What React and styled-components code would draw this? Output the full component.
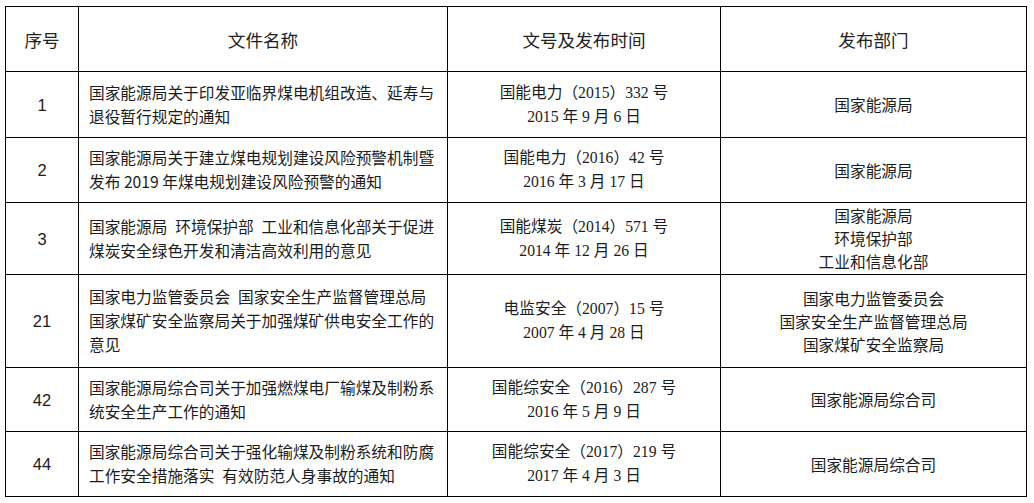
import React from "react";
import styled, { createGlobalStyle } from "styled-components";

const Global = createGlobalStyle`
  html, body { margin: 0; padding: 0; background: #fff; }
  body { font-family: "Noto Sans CJK SC", sans-serif; color: #1c1c1c; }
`;

const Page = styled.div`
  padding: 6px 0 0 5px;
`;

const Table = styled.table`
  border-collapse: collapse;
  table-layout: fixed;
  width: 1021px;
`;

const Row = styled.tr`
  height: ${(p) => p.$h}px;
`;

const HeadCell = styled.th`
  border: 1px solid #000;
  padding: 0;
  font-weight: 400;
  font-size: 17.6px;
  font-family: "Noto Sans CJK SC", sans-serif;
  text-align: center;
  vertical-align: middle;
  color: #222;
`;

const Cell = styled.td`
  border: 1px solid #000;
  padding: ${(p) => (p.$align === "left" ? "0 0 0 10px" : "0")};
  text-align: ${(p) => p.$align || "center"};
  vertical-align: middle;
  font-size: ${(p) => (p.$num ? "16.5px" : "15.7px")};
  line-height: ${(p) => p.$lh || 24}px;
  white-space: nowrap;
  font-family: ${(p) =>
    p.$serif
      ? `"Liberation Serif", "Noto Sans CJK SC", serif`
      : p.$num
      ? `"Liberation Sans", sans-serif`
      : `"Noto Sans CJK SC", sans-serif`};
  color: #1c1c1c;
`;

const Line = styled.div``;

const rows = [
  {
    h: 66,
    no: "1",
    name: ["国家能源局关于印发亚临界煤电机组改造、延寿与", "退役暂行规定的通知"],
    code: ["国能电力（2015）332 号", "2015 年 9 月 6 日"],
    dept: ["国家能源局"],
  },
  {
    h: 65,
    no: "2",
    name: ["国家能源局关于建立煤电规划建设风险预警机制暨", "发布 2019 年煤电规划建设风险预警的通知"],
    code: ["国能电力（2016）42 号", "2016 年 3 月 17 日"],
    dept: ["国家能源局"],
  },
  {
    h: 72,
    no: "3",
    name: ["国家能源局\u2002环境保护部\u2002工业和信息化部关于促进", "煤炭安全绿色开发和清洁高效利用的意见"],
    code: ["国能煤炭（2014）571 号", "2014 年 12 月 26 日"],
    dept: ["国家能源局", "环境保护部", "工业和信息化部"],
  },
  {
    h: 93,
    no: "21",
    name: ["国家电力监管委员会\u2002国家安全生产监督管理总局", "国家煤矿安全监察局关于加强煤矿供电安全工作的", "意见"],
    code: ["电监安全（2007）15 号", "2007 年 4 月 28 日"],
    dept: ["国家电力监管委员会", "国家安全生产监督管理总局", "国家煤矿安全监察局"],
  },
  {
    h: 64,
    no: "42",
    name: ["国家能源局综合司关于加强燃煤电厂输煤及制粉系", "统安全生产工作的通知"],
    code: ["国能综安全（2016）287 号", "2016 年 5 月 9 日"],
    dept: ["国家能源局综合司"],
  },
  {
    h: 65,
    no: "44",
    name: ["国家能源局综合司关于强化输煤及制粉系统和防腐", "工作安全措施落实\u2002有效防范人身事故的通知"],
    code: ["国能综安全（2017）219 号", "2017 年 4 月 3 日"],
    dept: ["国家能源局综合司"],
  },
];

const Lines = ({ items }) => items.map((t, i) => <Line key={i}>{t}</Line>);

export default function App() {
  return (
    <Page>
      <Global />
      <Table>
        <colgroup>
          <col style={{ width: 73 }} />
          <col style={{ width: 369 }} />
          <col style={{ width: 273 }} />
          <col style={{ width: 306 }} />
        </colgroup>
        <thead>
          <Row $h={65}>
            <HeadCell>序号</HeadCell>
            <HeadCell>文件名称</HeadCell>
            <HeadCell>文号及发布时间</HeadCell>
            <HeadCell>发布部门</HeadCell>
          </Row>
        </thead>
        <tbody>
          {rows.map((r) => (
            <Row key={r.no} $h={r.h}>
              <Cell $num>{r.no}</Cell>
              <Cell $align="left">
                <Lines items={r.name} />
              </Cell>
              <Cell $serif>
                <Lines items={r.code} />
              </Cell>
              <Cell $lh={23}>
                <Lines items={r.dept} />
              </Cell>
            </Row>
          ))}
        </tbody>
      </Table>
    </Page>
  );
}
